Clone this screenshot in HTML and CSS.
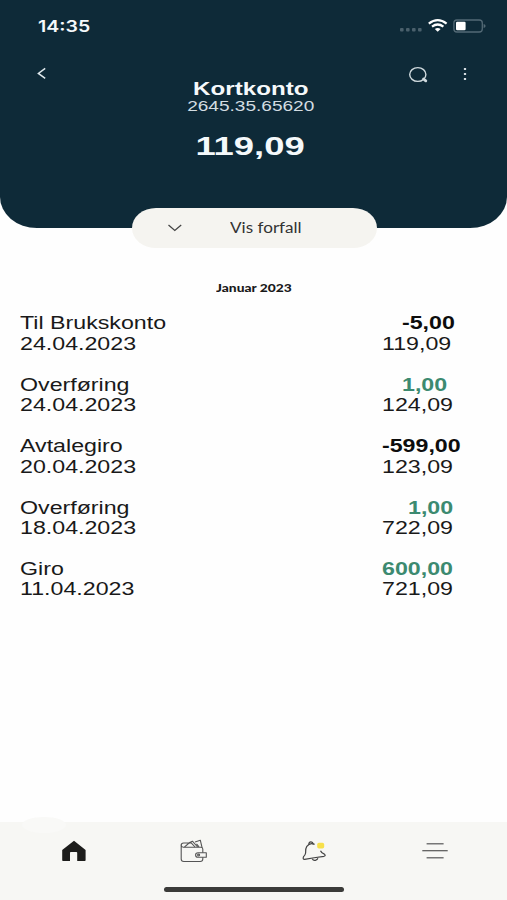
FILE: index.html
```html
<!DOCTYPE html>
<html lang="no">
<head>
  <meta charset="UTF-8">
  <meta name="viewport" content="width=device-width, initial-scale=1.0">
  <title>Kortkonto</title>
  <link rel="stylesheet" href="styles.css">
</head>
<body>
  <div class="app">
    <header class="header">
      <div class="status">
        <span class="time">14:35</span>
        <svg class="status-icons" width="88" height="16" viewBox="0 0 88 16">
          <g fill="#4a606c">
            <rect x="1" y="11" width="3.6" height="3.4" rx="1"/>
            <rect x="7" y="11" width="3.6" height="3.4" rx="1"/>
            <rect x="13" y="11" width="3.6" height="3.4" rx="1"/>
            <rect x="19" y="11" width="3.6" height="3.4" rx="1"/>
          </g>
          <g fill="none" stroke="#fff" stroke-width="2.2">
            <path d="M29.8 6.6Q38.7-.4 47.6 6.6"/>
            <path d="M33 9.7Q38.7 5.3 44.4 9.7"/>
          </g>
          <path d="M35.8 12.1Q38.7 9.9 41.6 12.1L38.7 14.8z" fill="#fff"/>
          <rect x="54.9" y="3" width="28.4" height="12" rx="3" fill="none" stroke="#536975" stroke-width="1.3"/>
          <rect x="57" y="4.8" width="9.6" height="8.5" rx="1.2" fill="#fff"/>
          <path d="M84.6 7v4q2-.5 2-2t-2-2z" fill="#536975"/>
        </svg>
      </div>
      <div class="toolbar">
        <svg class="back" width="12" height="14" viewBox="0 0 12 14"><path d="M9.2 2.4L2.4 7.4l6.8 5" fill="none" stroke="#dfe8ec" stroke-width="1.5"/></svg>
        <div class="tools">
          <svg width="22" height="18" viewBox="0 0 22 18" fill="none" stroke="#d0dade">
            <ellipse cx="9.8" cy="8.5" rx="8.1" ry="6.9" stroke-width="1.4"/>
            <path d="M15.6 13l2.2 1.8" stroke-width="2.8" stroke-linecap="round"/>
          </svg>
          <svg width="6" height="16" viewBox="0 0 6 16" fill="#e4ebee">
            <rect x="1.8" y="1.9" width="2.4" height="2.2" rx=".8"/>
            <rect x="1.8" y="6.9" width="2.4" height="2.2" rx=".8"/>
            <rect x="1.8" y="11.9" width="2.4" height="2.2" rx=".8"/>
          </svg>
        </div>
      </div>
      <div class="account">
        <h1>Kortkonto</h1>
        <p class="number">2645.35.65620</p>
        <p class="saldo">119,09</p>
      </div>
    </header>

    <div class="due">
      <svg width="16" height="10" viewBox="0 0 16 10"><path d="M1.5 2l6.3 5.4L14.2 2" fill="none" stroke="#444" stroke-width="1.3"/></svg>
      <span class="due-text">Vis forfall</span>
    </div>

    <main>
      <h2 class="month"><span>Januar 2023</span></h2>
      <ul class="list">
        <li class="row">
          <div class="col"><span>Til Brukskonto</span><span>24.04.2023</span></div>
          <div class="col"><b class="in-md">-5,00</b><span>119,09</span></div>
        </li>
        <li class="row">
          <div class="col"><span>Overføring</span><span>24.04.2023</span></div>
          <div class="col"><b class="plus in-md">1,00</b><span>124,09</span></div>
        </li>
        <li class="row">
          <div class="col"><span>Avtalegiro</span><span>20.04.2023</span></div>
          <div class="col"><b>-599,00</b><span>123,09</span></div>
        </li>
        <li class="row">
          <div class="col"><span>Overføring</span><span>18.04.2023</span></div>
          <div class="col"><b class="plus in-lg">1,00</b><span>722,09</span></div>
        </li>
        <li class="row">
          <div class="col"><span>Giro</span><span>11.04.2023</span></div>
          <div class="col"><b class="plus">600,00</b><span>721,09</span></div>
        </li>
      </ul>
    </main>

    <footer class="tabbar">
      <div class="bump"></div>
      <nav class="tabs">
        <svg width="30" height="26" viewBox="0 0 30 26"><path d="M15 2.8L3.2 12v10.2q0 .8.8.8h7v-8.2q0-.8.8-.8h5.6q.8 0 .8.8V23h7.6q.8 0 .8-.8V12z" fill="#1d1d1b"/></svg>
        <svg width="30" height="26" viewBox="0 0 30 26" fill="none" stroke="#555" stroke-width="1.1" stroke-linejoin="round">
          <path d="M23.8 14.8V11q0-1.8-2-1.8H4.2q-2-.3-2-2.2v14q0 2.5 2.6 2.5h16.4q2.6 0 2.6-2.5v-1.7"/>
          <path d="M2.2 7.2Q2.2 5 4.6 5H9M5.5 9L10 5.2l2.2-.4L16 9M8.5 5.4L13.4 3.2l5.2 5.8M16 4l5.3-1.8L23 9.4M17.5 5.8l2.5 3"/>
          <path d="M19 14.7h8.3v4.6H19q-2.4 0-2.4-2.3t2.4-2.3z"/>
          <ellipse cx="19.6" cy="17" rx="1" ry=".9"/>
        </svg>
        <svg width="30" height="26" viewBox="0 0 30 26" fill="none" stroke="#444" stroke-width="1.2" stroke-linejoin="round">
          <path d="M14.6 6.4Q10 4.2 6.8 8.4 5.2 10.8 5.6 15 5.3 17 3.6 18.6q-1.2 2.8 1 2.8Q14 19.5 24 18.3q2.2-.8.4-2.2-3-1-3.9-3.4"/>
          <path d="M8.8 6.4Q9 3.7 11 3.8q1.9.2 2.3 2.5M12.2 20.8q1.1 2 3.2 1.5 2-.4 2.5-2"/>
          <rect x="17.2" y="4.8" width="7" height="5.6" rx="1.7" fill="#f7e04b" stroke="none"/>
        </svg>
        <svg width="30" height="26" viewBox="0 0 30 26" stroke="#777" fill="none">
          <path d="M6.6 5.7h17M6.6 19.7h17" stroke-width="1.4"/>
          <path d="M2.3 12.7h25.4" stroke-width="1.2" stroke="#555"/>
        </svg>
      </nav>
      <div class="home-line"></div>
    </footer>
  </div>
</body>
</html>
```
FILE: styles.css
```css
body {
  margin: 0;
  background: #fefefe;
  font-family: "Liberation Sans", Arial, sans-serif;
  color: #191919;
}
h1,
h2,
p,
ul {
  margin: 0;
  padding: 0;
}
.app {
  display: flex;
  flex-direction: column;
  height: 900px;
  overflow: hidden;
}

/* header */
.header {
  box-sizing: border-box;
  height: 228px;
  background: #0e2a38;
  color: #f5f9fb;
  border-radius: 0 0 37px 37px / 0 0 31px 31px;
}
.status {
  display: flex;
  justify-content: space-between;
  padding: 17px 20px 0 38px;
  height: 18px;
}
.time {
  font: 600 16px/18px Inter, sans-serif;
  transform: scaleX(1.22);
  transform-origin: left;
}
.toolbar {
  display: flex;
  justify-content: space-between;
  padding: 31px 39px 0 36px;
  height: 14px;
}
.tools {
  display: flex;
  gap: 32px;
}
.account {
  display: flex;
  flex-direction: column;
  align-items: center;
  padding-right: 6px;
}
.account h1 {
  font-size: 17.5px;
  line-height: 18px;
  transform: scaleX(1.38);
}
.number {
  font-size: 14px;
  line-height: 17px;
  transform: scaleX(1.36);
  color: #d3dde2;
}
.saldo {
  font-size: 26px;
  line-height: 30px;
  font-weight: bold;
  margin-top: 16px;
  transform: scaleX(1.4);
}

/* pill */
.due {
  display: flex;
  align-items: center;
  box-sizing: border-box;
  width: 245px;
  height: 40px;
  margin: -20px 0 0 132px;
  padding-left: 35px;
  border-radius: 24px / 20px;
  background: #f5f4f0;
  z-index: 1;
}
.due-text {
  margin-left: 47px;
  font: 14.5px/20px Lato, sans-serif;
  transform: scaleX(1.18);
  transform-origin: left;
  color: #333;
}

/* transactions */
.month {
  margin-top: 30px;
  text-align: center;
  font: 900 12px/20px Lato, sans-serif;
}
.month span {
  display: inline-block;
  transform: scaleX(1.15);
}
.list {
  list-style: none;
  margin-top: 15.4px;
}
.row {
  display: grid;
  grid-template-columns: 362px 1fr;
  padding-left: 19.6px;
  height: 61.4px;
}
.col {
  display: flex;
  flex-direction: column;
  align-items: flex-start;
  font-size: 17.5px;
  line-height: 20.5px;
}
.col span,
.col b {
  transform: scaleX(1.325);
  transform-origin: left;
}
.col b {
  color: #0d0d0d;
}
.col .plus {
  color: #3c8a70;
}
.col .in-md {
  margin-left: 20px;
}
.col .in-lg {
  margin-left: 26px;
}

/* bottom navigation */
.tabbar {
  height: 78px;
  margin-top: auto;
  background: #f7f7f4;
}
.bump {
  width: 44px;
  height: 16px;
  margin: -5px 0 -11px 22px;
  border-radius: 50%;
  background: #f9f9f7;
}
.tabs {
  display: flex;
  justify-content: space-between;
  padding: 16px 57px 0 59px;
}
.home-line {
  width: 180px;
  height: 5px;
  margin: 23px 0 0 164px;
  border-radius: 3px;
  background: #3b3b39;
}
```
